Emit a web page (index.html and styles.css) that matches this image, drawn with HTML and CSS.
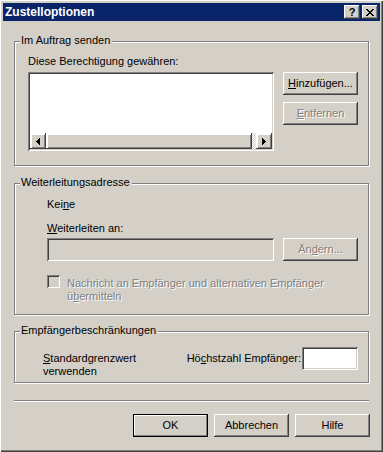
FILE: index.html
```html
<!DOCTYPE html>
<html lang="de">
<head>
    <meta charset="UTF-8">
    <title>Zustelloptionen</title>
    <link rel="stylesheet" href="styles.css">
</head>
<body>
    <div class="window">
        <div class="titlebar">
            <span class="title">Zustelloptionen</span>
            <div class="caption-buttons">
                <span class="cap-btn">?</span>
                <span class="cap-btn">
                    <svg width="8" height="7" viewBox="0 0 8 7" shape-rendering="crispEdges"><path d="M0 0h2v1H0zM6 0h2v1H6zM1 1h2v1H1zM5 1h2v1H5zM2 2h4v1H2zM3 3h2v1H3zM2 4h4v1H2zM1 5h2v1H1zM5 5h2v1H5zM0 6h2v1H0zM6 6h2v1H6z" fill="#000"/></svg>
                </span>
            </div>
        </div>

        <div class="content">
            <!-- Im Auftrag senden -->
            <div class="group group-first">
                <div class="legend">Im Auftrag senden</div>
                <div class="delegate-body">
                    <div class="list-col">
                        <div class="label">Diese Berechtigung gewähren:</div>
                        <div class="listbox sunken">
                            <div class="list-items"></div>
                            <div class="hscroll">
                                <span class="sb-btn">
                                    <svg width="4" height="7" viewBox="0 0 4 7" shape-rendering="crispEdges"><path d="M0 3h1v1H0zM1 2h1v3H1zM2 1h1v5H2zM3 0h1v7H3z" fill="#000"/></svg>
                                </span>
                                <span class="sb-thumb"></span>
                                <span class="sb-track"></span>
                                <span class="sb-btn">
                                    <svg width="4" height="7" viewBox="0 0 4 7" shape-rendering="crispEdges"><path d="M0 0h1v7H0zM1 1h1v5H1zM2 2h1v3H2zM3 3h1v1H3z" fill="#000"/></svg>
                                </span>
                            </div>
                        </div>
                    </div>
                    <div class="side-buttons">
                        <button class="btn"><u>H</u>inzufügen...</button>
                        <button class="btn" disabled><u>E</u>ntfernen</button>
                    </div>
                </div>
            </div>

            <!-- Weiterleitungsadresse -->
            <div class="group">
                <div class="legend">Weiterleitungsadresse</div>
                <div class="forward-body">
                    <div class="label">Kei<u>n</u>e</div>
                    <div class="label label-gap"><u>W</u>eiterleiten an:</div>
                    <div class="field-row">
                        <div class="field sunken"></div>
                        <button class="btn" disabled>Än<u>d</u>ern...</button>
                    </div>
                    <div class="check-row">
                        <span class="checkbox sunken"></span>
                        <span class="check-text">Nachricht an Empfänger und alternativen Empfänger<br>ü<u>b</u>ermitteln</span>
                    </div>
                </div>
            </div>

            <!-- Empfängerbeschränkungen -->
            <div class="group">
                <div class="legend">Empfängerbeschränkungen</div>
                <div class="limits-body">
                    <div class="limit-text"><u>S</u>tandardgrenzwert<br>verwenden</div>
                    <div class="max-label">Hö<u>c</u>hstzahl Empfänger:</div>
                    <div class="field field-small field-white sunken"></div>
                </div>
            </div>

            <div class="separator"></div>

            <div class="dialog-buttons">
                <button class="btn btn-default">OK</button>
                <button class="btn">Abbrechen</button>
                <button class="btn">Hilfe</button>
            </div>
        </div>
    </div>
</body>
</html>
```

FILE: styles.css
```css
* {
    box-sizing: border-box;
}
body {
    margin: 0;
    font-family: "Liberation Sans", Arial, sans-serif;
    font-size: 11px;
    line-height: 13px;
    color: #000;
    background: #d4d0c8;
}
u {
    text-underline-offset: 1px;
}
.window {
    width: 383px;
    height: 452px;
    padding: 3px;
    background: #d4d0c8;
    box-shadow: inset 1px 1px #fff, inset -1px -1px #404040, inset -2px -2px #808080;
}
.titlebar {
    height: 18px;
    background: #0a246a;
    color: #fff;
    display: flex;
    align-items: center;
    justify-content: space-between;
    padding-left: 2px;
}
.title {
    font-weight: bold;
    font-size: 12px;
}
.caption-buttons {
    display: flex;
    gap: 2px;
    margin-right: 2px;
}
.cap-btn {
    width: 16px;
    height: 14px;
    display: flex;
    align-items: center;
    justify-content: center;
    background: #d4d0c8;
    color: #000;
    font-weight: bold;
    font-size: 11px;
    box-shadow: inset -1px -1px #404040, inset 1px 1px #fff, inset -2px -2px #808080;
}
.content {
    padding: 0 11px;
}
.group {
    margin-top: 16px;
    border: 1px solid #808080;
    box-shadow: inset 1px 1px #fff, 1px 1px #fff;
}
.group-first {
    margin-top: 20px;
}
.group-first + .group {
    margin-top: 17px;
}
.legend {
    display: table;
    margin: -8px 0 0 5px;
    padding: 0 2px 0 1px;
    background: #d4d0c8;
}
.sunken {
    box-shadow: inset 1px 1px #808080, inset -1px -1px #fff, inset 2px 2px #404040, inset -2px -2px #d4d0c8;
}
.btn {
    width: 75px;
    height: 23px;
    padding: 0;
    border: none;
    background: #d4d0c8;
    font: inherit;
    color: #000;
    box-shadow: inset -1px -1px #404040, inset 1px 1px #fff, inset -2px -2px #808080;
}
.btn:disabled {
    color: #808080;
    text-shadow: 1px 1px #fff;
}
.btn-default {
    border: 1px solid #000;
    box-shadow: inset -1px -1px #808080, inset 1px 1px #fff;
}

/* Im Auftrag senden */
.delegate-body {
    display: flex;
    gap: 9px;
    padding: 8px 10px 14px 13px;
}
.listbox {
    width: 246px;
    height: 79px;
    margin-top: 4px;
    padding: 2px;
    background: #fff;
    display: flex;
    flex-direction: column;
}
.list-items {
    flex: 1;
}
.hscroll {
    height: 16px;
    display: flex;
}
.sb-btn,
.sb-thumb {
    height: 16px;
    background: #d4d0c8;
    box-shadow: inset -1px -1px #404040, inset 2px 2px #fff, inset 1px 1px #d4d0c8, inset -2px -2px #808080;
}
.sb-btn {
    width: 16px;
    display: flex;
    align-items: center;
    justify-content: center;
}
.sb-thumb {
    width: 206px;
}
.sb-track {
    flex: 1;
    background: conic-gradient(#fff 90deg, #d4d0c8 90deg 180deg, #fff 180deg 270deg, #d4d0c8 270deg);
    background-size: 2px 2px;
}
.side-buttons {
    display: flex;
    flex-direction: column;
    gap: 7px;
    padding-top: 17px;
}

/* Weiterleitungsadresse */
.forward-body {
    padding: 9px 10px 11px 32px;
}
.label-gap {
    margin-top: 11px;
}
.field-row {
    display: flex;
    gap: 9px;
    margin-top: 3px;
}
.field {
    width: 227px;
    height: 23px;
    background: #d4d0c8;
}
.check-row {
    display: flex;
    margin-top: 14px;
}
.checkbox {
    width: 13px;
    height: 13px;
    flex: none;
    background: #d4d0c8;
}
.check-text {
    margin: 2px 0 0 7px;
    color: #808080;
    text-shadow: 1px 1px #fff;
}

/* Empfängerbeschränkungen */
.limits-body {
    display: flex;
    align-items: flex-start;
    padding: 10px 10px 4px 28px;
}
.limit-text {
    margin-top: 5px;
}
.max-label {
    margin: 5px 1px 0 auto;
}
.field-small {
    width: 56px;
}
.field-white {
    background: #fff;
}

.separator {
    margin-top: 17px;
    border-top: 1px solid #808080;
    border-bottom: 1px solid #fff;
}
.dialog-buttons {
    display: flex;
    justify-content: flex-end;
    gap: 6px;
    margin: 12px -1px 0 0;
}
```
